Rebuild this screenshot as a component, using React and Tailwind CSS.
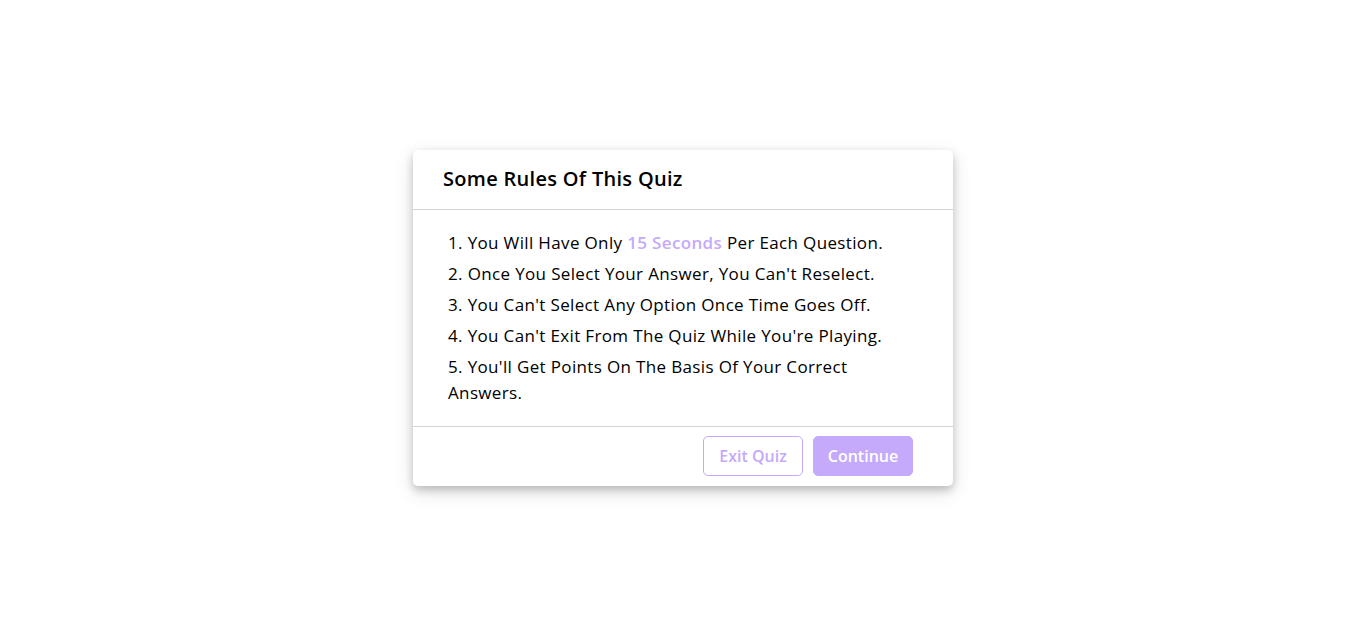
export default function App() {
  const font = { fontFamily: '"Open Sans", "Noto Sans", sans-serif' };
  return (
    <div className="w-full h-[635px] bg-white flex items-center justify-center" style={font}>
      <div className="w-[540px] bg-white rounded-[5px] shadow-[0_4px_8px_0_rgba(0,0,0,0.2),0_6px_20px_0_rgba(0,0,0,0.12)]">
        <div className="h-[60px] px-[30px] flex items-center border-b border-[#d3d3d3] text-[20px] font-semibold text-black tracking-[0.3px]">
          Some Rules Of This Quiz
        </div>
        <div className="px-[35px] py-[15px] text-[17px] leading-[26px] text-black tracking-[0.35px]">
          <div className="my-[5px]">1. You Will Have Only <span className="font-semibold text-[#c5aafc]">15 Seconds</span> Per Each Question.</div>
          <div className="my-[5px]">2. Once You Select Your Answer, You Can't Reselect.</div>
          <div className="my-[5px]">3. You Can't Select Any Option Once Time Goes Off.</div>
          <div className="my-[5px]">4. You Can't Exit From The Quiz While You're Playing.</div>
          <div className="my-[5px]">5. You'll Get Points On The Basis Of Your Correct<br />Answers.</div>
        </div>
        <div className="h-[60px] px-[30px] flex items-center justify-end border-t border-[#d3d3d3] gap-[10px] pr-[40px]">
          <button className="w-[100px] h-[40px] rounded-[5px] border border-[#c5aafc] bg-white text-[#c5aafc] text-[16px] font-semibold">Exit Quiz</button>
          <button className="w-[100px] h-[40px] rounded-[5px] border border-[#c5aafc] bg-[#c5aafc] text-white text-[16px] font-semibold">Continue</button>
        </div>
      </div>
    </div>
  );
}
